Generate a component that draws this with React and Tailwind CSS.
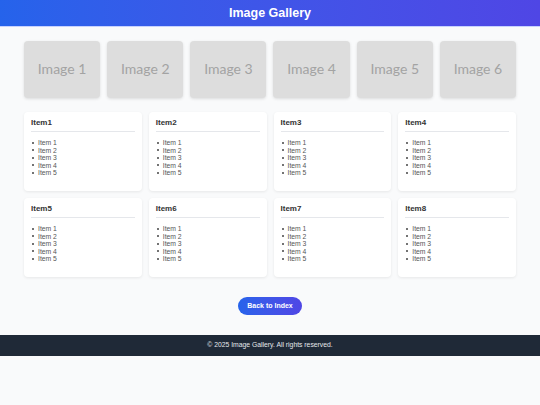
const IMAGES = [1, 2, 3, 4, 5, 6];
const CARDS = [1, 2, 3, 4, 5, 6, 7, 8];
const LIST = ["Item 1", "Item 2", "Item 3", "Item 4", "Item 5"];

export default function App() {
  return (
    <div className="min-h-[405px] bg-[#f9fafb] font-['Liberation_Sans',Arial,sans-serif] antialiased">
      {/* Header */}
      <header className="h-[27px] bg-gradient-to-r from-[#2563eb] to-[#4f46e5] flex items-center justify-center border-b border-[#c7d2fe]">
        <h1 className="text-white font-bold text-[12.5px]">Image Gallery</h1>
      </header>

      <main className="px-[24px] pt-[14px]">
        {/* Image tiles */}
        <div className="grid grid-cols-6 gap-[7px]">
          {IMAGES.map((n) => (
            <div
              key={n}
              className="h-[57px] rounded-[4px] bg-[#dddddd] shadow-[0_1px_3px_rgba(0,0,0,0.12)] flex items-center justify-center pb-[1px]"
            >
              <span className="font-['Lato',sans-serif] text-[14px] leading-[14px] text-[#a3a3a3]">Image {n}</span>
            </div>
          ))}
        </div>

        {/* Cards */}
        <div className="grid grid-cols-4 gap-[7px] mt-[14px]">
          {CARDS.map((n) => (
            <div
              key={n}
              className="h-[79px] bg-white rounded-[4px] shadow-[0_1px_3px_rgba(0,0,0,0.08)] px-[7px] pt-[6px]"
            >
              <h2 className="text-[8px] font-bold text-[#333] leading-[10px] pb-[3px] border-b border-[#e5e7eb]">
                Item{n}
              </h2>
              <ul className="pl-[1px] mt-[7px] text-[6.8px] leading-[7.5px] text-[#555]">
                {LIST.map((item) => (
                  <li key={item} className="flex items-center gap-[4px]">
                    <span className="w-[2px] h-[2px] rounded-full bg-[#444]" />
                    {item}
                  </li>
                ))}
              </ul>
            </div>
          ))}
        </div>

        {/* Back button */}
        <div className="flex justify-center mt-[20px] mb-[20px]">
          <button className="h-[18px] w-[64px] rounded-full bg-gradient-to-r from-[#2563eb] to-[#4f46e5] text-white text-[7px] font-bold">
            Back to Index
          </button>
        </div>
      </main>

      {/* Footer */}
      <footer className="h-[21px] bg-[#1f2937] flex items-center justify-center">
        <p className="text-[#e5e7eb] text-[6.8px]">© 2025 Image Gallery. All rights reserved.</p>
      </footer>
    </div>
  );
}
